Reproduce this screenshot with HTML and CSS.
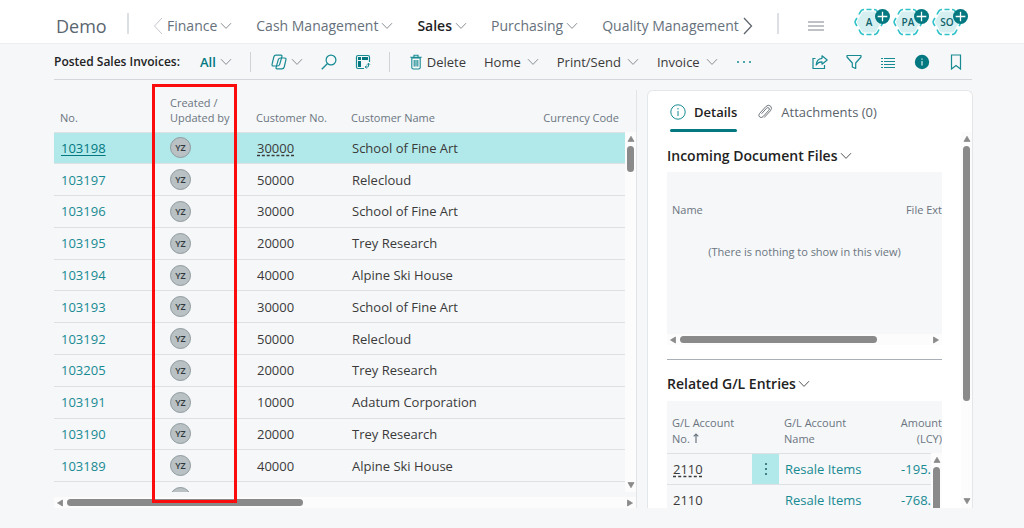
FILE: index.html
```html
<!DOCTYPE html>
<html lang="en">
<head>
<meta charset="utf-8">
<meta name="viewport" content="width=device-width, initial-scale=1">
<title>Posted Sales Invoices</title>
<link rel="stylesheet" href="styles.css">
</head>
<body>
<svg class="defs" aria-hidden="true">
  <symbol id="chev" viewBox="0 0 12 8"><path d="M1 1.2 6 6.4 11 1.2" fill="none" stroke="currentColor"/></symbol>
  <symbol id="up" viewBox="0 0 8 6"><path d="M4 0.3 7 5.4H1Z" fill="#8a8a8a" stroke="#8a8a8a" stroke-width=".8" stroke-linejoin="round"/></symbol>
  <symbol id="down" viewBox="0 0 8 6"><path d="M4 5.7 7 .6H1Z" fill="#8a8a8a" stroke="#8a8a8a" stroke-width=".8" stroke-linejoin="round"/></symbol>
  <symbol id="left" viewBox="0 0 6 8"><path d="M.5 4 5.5 1V7Z" fill="#8a8a8a" stroke="#8a8a8a" stroke-width=".8" stroke-linejoin="round"/></symbol>
  <symbol id="right" viewBox="0 0 6 8"><path d="M5.5 4 .5 1V7Z" fill="#8a8a8a" stroke="#8a8a8a" stroke-width=".8" stroke-linejoin="round"/></symbol>
  <symbol id="hex" viewBox="0 0 32 28"><path d="M10.5 5h11L26.500 14l-5 9h-11L5.500 14Z" fill="#d6eff1" stroke="#d6eff1" stroke-width="3" stroke-linejoin="round"/><path d="M6 6.500 7.200 4.200Q8.500 1.500 11 1.500M13.500 1.500H18.500M21 1.500Q23.500 1.500 24.800 4.200L26 6.500M28 10 29.500 12.500Q30.500 14 29.500 15.500L28 18M26 21.500 24.800 23.800Q23.500 26.500 21 26.500M18.500 26.500H13.500M11 26.500Q8.500 26.500 7.200 23.800L6 21.500M4 18 2.500 15.500Q1.500 14 2.500 12.500L4 10" fill="none" stroke="#2fc2c9" stroke-width="1.600"/></symbol>
  <symbol id="plus" viewBox="0 0 14 14"><circle cx="7" cy="7" r="7" fill="#037880"/><path d="M7 2.500v9M2.500 7h9" stroke="#fff" stroke-width="1.200"/></symbol>
</svg>

<header class="topbar">
  <a class="brand" href="#">Demo</a>
  <span class="rule"></span>
  <nav class="menu" aria-label="Main">
    <button class="arrow prev" aria-label="Previous"><svg viewBox="0 0 10 18"><path d="M9 1 1.500 9 9 17" fill="none" stroke="currentColor"/></svg></button>
    <div class="items">
      <button>Finance<svg class="chev"><use href="#chev"/></svg></button>
      <button>Cash Management<svg class="chev"><use href="#chev"/></svg></button>
      <button class="current">Sales<svg class="chev"><use href="#chev"/></svg></button>
      <button>Purchasing<svg class="chev"><use href="#chev"/></svg></button>
      <button>Quality Management</button>
    </div>
    <button class="arrow next" aria-label="Next"><svg viewBox="0 0 10 18"><path d="M1 1 8.500 9 1 17" fill="none" stroke="currentColor" stroke-width="1.300"/></svg></button>
  </nav>
  <span class="rule"></span>
  <button class="burger" aria-label="More"><svg viewBox="0 0 16 10"><path d="M0 1h16M0 5h16M0 9h16" stroke="#7c838a"/></svg></button>
  <div class="agents">
    <button class="agent"><svg class="hex"><use href="#hex"/></svg><span>A</span><svg class="plus"><use href="#plus"/></svg></button>
    <button class="agent"><svg class="hex"><use href="#hex"/></svg><span>PA</span><svg class="plus"><use href="#plus"/></svg></button>
    <button class="agent"><svg class="hex"><use href="#hex"/></svg><span>SO</span><svg class="plus"><use href="#plus"/></svg></button>
  </div>
</header>

<div class="toolbar">
  <h1>Posted Sales Invoices:</h1>
  <button class="view">All<svg class="chev"><use href="#chev"/></svg></button>
  <span class="rule"></span>
  <div class="tools">
    <button aria-label="Copilot"><svg class="i16" viewBox="0 0 16 16"><g fill="none" stroke="#178a92" stroke-width="1.200" stroke-linejoin="round"><path d="M5 1.200h5q1.300 0 .9 1.500L8.700 10.300Q8.200 12 6.500 12h-4Q.7 12 1.100 10.200L2.800 3Q3.300 1.200 5 1.200Z"/><path d="M11 14.800H6q-1.300 0-.9-1.500L7.300 5.700Q7.800 4 9.500 4h4q1.800 0 1.400 1.800L13.200 13Q12.700 14.800 11 14.800Z"/></g></svg><svg class="chev"><use href="#chev"/></svg></button>
    <button aria-label="Search"><svg class="i16" viewBox="0 0 16 16"><circle cx="10" cy="6" r="4.900" fill="none" stroke="#178a92" stroke-width="1.200"/><path d="M6.500 9.500.8 15.200" stroke="#178a92" stroke-width="1.300"/></svg></button>
    <button aria-label="Analyze"><svg class="i16" viewBox="0 0 16 16"><path d="M14.500 8V3Q14.500 1.500 13 1.500H3Q1.500 1.500 1.500 3V13Q1.500 14.500 3 14.500H9" fill="none" stroke="#178a92" stroke-width="1.200"/><path d="M3 3h3v3H3ZM7 3h6v3H7ZM3 7h3v6H3Z" fill="#037880"/><path d="M13.500 9.500V12q0 1-1 1H10.500M12 10.700 13.500 9.200 15 10.700M11.700 11.500 10.200 13l1.500 1.500" fill="none" stroke="#178a92" stroke-width="1"/></svg></button>
  </div>
  <span class="rule"></span>
  <div class="actions">
    <button class="delete"><svg class="trash" viewBox="0 0 12 16"><path d="M1.800 4h8.400v9.500q0 1.500-1.500 1.500H3.300q-1.500 0-1.500-1.500ZM.3 3.200h11.400M4 3V1.200h4V3M4.200 6v6.500M6 6v6.500M7.800 6v6.500" fill="none" stroke="#178a92" stroke-width="1.100"/></svg>Delete</button>
    <button>Home<svg class="chev"><use href="#chev"/></svg></button>
    <button>Print/Send<svg class="chev"><use href="#chev"/></svg></button>
    <button>Invoice<svg class="chev"><use href="#chev"/></svg></button>
    <button aria-label="More options"><svg class="dots" viewBox="0 0 16 4"><circle cx="2" cy="2" r="1" fill="#178a92"/><circle cx="8" cy="2" r="1" fill="#178a92"/><circle cx="14" cy="2" r="1" fill="#178a92"/></svg></button>
  </div>
  <div class="side-tools">
    <button aria-label="Share"><svg class="i16" viewBox="0 0 16 16"><path d="M3.500 4.500H1v10h11.500V11" fill="none" stroke="#178a92" stroke-width="1.200"/><path d="M10 1.800 15.200 6 10 10.200V7.800Q6.500 7.500 4.200 11 4.500 5 10 4.300Z" fill="none" stroke="#178a92" stroke-width="1.200" stroke-linejoin="round"/></svg></button>
    <button aria-label="Filter"><svg class="i16" viewBox="0 0 16 16"><path d="M1 1.500H15V3L9.700 9v5.500L6.300 13V9L1 3Z" fill="none" stroke="#178a92" stroke-width="1.200" stroke-linejoin="round"/></svg></button>
    <button aria-label="List"><svg class="i16" viewBox="0 0 16 16"><path d="M1 4.500h2M4 4.500h11M1 7.500h2M4 7.500h11M1 10.500h2M4 10.500h11M1 13.500h2M4 13.500h11" stroke="#178a92" stroke-width="1.100"/></svg></button>
    <button aria-label="Information"><svg class="i16" viewBox="0 0 16 16"><circle cx="8" cy="8" r="7.200" fill="#037880"/><path d="M8 7v4.500M8 4.400v1.300" stroke="#d6eff1" stroke-width="1.200"/></svg></button>
    <button aria-label="Bookmark"><svg class="i16" viewBox="0 0 16 16"><path d="M3.500 1h9v14L8 11.500 3.500 15Z" fill="none" stroke="#178a92" stroke-width="1.200"/></svg></button>
  </div>
</div>

<main class="content">
  <section class="list">
    <div class="viewport">
      <table class="invoices">
        <colgroup><col class="c-no"><col class="c-by"><col class="c-cust"><col><col class="c-cur"></colgroup>
        <thead><tr><th>No.</th><th>Created /<br>Updated by</th><th>Customer No.</th><th>Customer Name</th><th class="num">Currency Code</th></tr></thead>
        <tbody>
          <tr class="selected"><td><a href="#">103198</a></td><td><span class="avatar">YZ</span></td><td><span class="lookup">30000</span></td><td>School of Fine Art</td><td></td></tr>
          <tr><td><a href="#">103197</a></td><td><span class="avatar">YZ</span></td><td>50000</td><td>Relecloud</td><td></td></tr>
          <tr><td><a href="#">103196</a></td><td><span class="avatar">YZ</span></td><td>30000</td><td>School of Fine Art</td><td></td></tr>
          <tr><td><a href="#">103195</a></td><td><span class="avatar">YZ</span></td><td>20000</td><td>Trey Research</td><td></td></tr>
          <tr><td><a href="#">103194</a></td><td><span class="avatar">YZ</span></td><td>40000</td><td>Alpine Ski House</td><td></td></tr>
          <tr><td><a href="#">103193</a></td><td><span class="avatar">YZ</span></td><td>30000</td><td>School of Fine Art</td><td></td></tr>
          <tr><td><a href="#">103192</a></td><td><span class="avatar">YZ</span></td><td>50000</td><td>Relecloud</td><td></td></tr>
          <tr><td><a href="#">103205</a></td><td><span class="avatar">YZ</span></td><td>20000</td><td>Trey Research</td><td></td></tr>
          <tr><td><a href="#">103191</a></td><td><span class="avatar">YZ</span></td><td>10000</td><td>Adatum Corporation</td><td></td></tr>
          <tr><td><a href="#">103190</a></td><td><span class="avatar">YZ</span></td><td>20000</td><td>Trey Research</td><td></td></tr>
          <tr><td><a href="#">103189</a></td><td><span class="avatar">YZ</span></td><td>40000</td><td>Alpine Ski House</td><td></td></tr>
          <tr><td></td><td><span class="avatar"></span></td><td></td><td></td><td></td></tr>
        </tbody>
      </table>
    </div>
    <div class="vscroll list-v"><svg><use href="#up"/></svg><i class="thumb"></i><svg class="end"><use href="#down"/></svg></div>
    <div class="hscroll list-h"><svg><use href="#left"/></svg><i class="thumb"></i><svg class="end"><use href="#right"/></svg></div>
    <div class="highlight"></div>
  </section>

  <aside class="factbox">
    <div class="tabs">
      <button class="active"><svg class="i16" viewBox="0 0 16 16"><circle cx="8" cy="8" r="7.200" fill="none" stroke="#178a92"/><path d="M8 7v5M8 4v1.500" stroke="#178a92"/></svg>Details</button>
      <button><svg class="i16" viewBox="0 0 16 16"><path d="M4.500 9.800 9.600 4.200q1.200-1.200 2.300-.2t0 2.200L6 12.700q-1.800 1.700-3.500.2-1.500-1.700.1-3.500L8.800 2.600q2.500-2.500 4.800-.5 2 2.200-.2 4.700L7.200 13.500" fill="none" stroke="#70767c" stroke-width="1"/></svg>Attachments (0)</button>
    </div>
    <div class="parts">
      <div class="flow">
        <section class="part">
          <h2>Incoming Document Files<svg class="chev"><use href="#chev"/></svg></h2>
          <div class="files">
            <div class="files-head"><span>Name</span><span>File Ext</span></div>
            <p>(There is nothing to show in this view)</p>
          </div>
          <div class="hscroll files-h"><svg><use href="#left"/></svg><i class="thumb"></i><svg class="end"><use href="#right"/></svg></div>
        </section>
        <section class="part second">
          <h2>Related G/L Entries<svg class="chev"><use href="#chev"/></svg></h2>
          <div class="entries-box">
            <table class="entries">
              <colgroup><col class="e-no"><col class="e-dots"><col><col class="e-amt"></colgroup>
              <thead><tr><th>G/L Account<br>No. <svg class="sort" viewBox="0 0 6 10"><path d="M3 10V1M.7 3.300 3 1 5.300 3.300" fill="none" stroke="currentColor" stroke-width="1.200"/></svg></th><th></th><th>G/L Account<br>Name</th><th class="num">Amount<br>(LCY)</th></tr></thead>
              <tbody>
                <tr><td><span class="lookup">2110</span></td><td class="dots-cell"><button aria-label="Row options"><svg viewBox="0 0 4 14"><circle cx="2" cy="2" r="1" fill="#1d5c63"/><circle cx="2" cy="7" r="1" fill="#1d5c63"/><circle cx="2" cy="12" r="1" fill="#1d5c63"/></svg></button></td><td><a href="#">Resale Items</a></td><td class="num"><a href="#">-195.</a></td></tr>
                <tr><td>2110</td><td></td><td><a href="#">Resale Items</a></td><td class="num"><a href="#">-768.</a></td></tr>
              </tbody>
            </table>
            <div class="vscroll entries-v"><svg><use href="#up"/></svg><i class="thumb"></i></div>
          </div>
        </section>
      </div>
      <div class="vscroll parts-v"><svg><use href="#up"/></svg><i class="thumb"></i><svg class="end"><use href="#down"/></svg></div>
    </div>
  </aside>
</main>
</body>
</html>
```
FILE: styles.css
```css
* { box-sizing: border-box; }
body {
  margin: 0;
  height: 100vh;
  display: flex;
  flex-direction: column;
  overflow: hidden;
  background: #f5f7f9;
  color: #3b3a39;
  font: 13px/20px "Open Sans", "Noto Sans", sans-serif;
}
button {
  display: flex;
  align-items: center;
  padding: 0;
  border: 0;
  background: none;
  color: inherit;
  font: inherit;
  white-space: nowrap;
}
a { color: #178a92; text-decoration: none; }
svg { flex: none; }
.defs { position: absolute; width: 0; height: 0; }
.chev { width: 12px; height: 8px; color: #8a8f94; }
.i16 { width: 16px; height: 16px; }
.rule { flex: none; width: 1px; height: 20px; background: #d0d4d8; }

/* Top navigation */
.topbar {
  flex: none;
  display: flex;
  align-items: center;
  height: 44px;
  padding: 8px 52px 0 56px;
  background: #fff;
  border-bottom: 1px solid #eceef0;
  color: #66717c;
  font-size: 14px;
}
.brand { width: 71px; color: #5b6670; font-size: 18px; }
.topbar .rule { width: 2px; height: 21px; background: #dcdfe3; margin-bottom: 4px; }
.menu { display: flex; align-items: center; flex: 1; min-width: 0; padding: 0 24px; }
.items { display: flex; gap: 24px; flex: 1; min-width: 0; overflow: hidden; }
.items button { gap: 3px; }
.items .current { color: #1f1f1f; font-weight: 600; }
.arrow svg { width: 10px; height: 18px; }
.prev { margin-right: 4px; color: #c3c7cc; }
.next { color: #5f666d; }
.burger { margin: 0 29px; }
.burger svg { width: 16px; height: 10px; }
.agents { display: flex; gap: 7px; padding-right: 9px; }
.agent { position: relative; justify-content: center; width: 32px; height: 28px; margin-bottom: 8px; color: #10636a; font-size: 10px; font-weight: 600; }
.hex { position: absolute; inset: 0; width: 32px; height: 28px; }
.agent span { position: relative; }
.plus { position: absolute; top: 1px; right: -5px; width: 15px; height: 15px; }

/* Action bar */
.toolbar {
  flex: none;
  display: flex;
  align-items: center;
  height: 36px;
  margin: 0 52px 0 54px;
  border-bottom: 1px solid #d3d6da;
}
h1 { margin: 0 20px 0 0; color: #222; font-size: 12px; font-weight: 600; white-space: nowrap; }
.view { gap: 4px; margin-right: 18px; color: #037880; font-weight: 600; }
.tools { display: flex; align-items: center; gap: 18px; padding: 0 18px 0 20px; }
.tools button { gap: 4px; }
.actions { display: flex; align-items: center; gap: 18px; padding-left: 20px; }
.actions button { gap: 6px; }
.actions .delete { gap: 5px; }
.trash { width: 12px; height: 16px; }
.dots { width: 16px; height: 4px; }
.side-tools { display: flex; gap: 18px; margin-left: auto; padding-right: 8px; }

/* Page body */
.content { flex: 1; min-height: 0; display: flex; gap: 10px; margin: 0 51px 20px 54px; }
.list { position: relative; flex: 1; min-width: 0; display: grid; grid-template: minmax(0, 1fr) 11px / minmax(0, 1fr) 11px; row-gap: 5px; padding-right: 1px; }
.list::after { content: ""; position: absolute; top: 10px; right: 0; bottom: 0; width: 1px; background: #e2e5e8; }
.viewport { overflow: hidden; }
table { width: 100%; border-collapse: collapse; table-layout: fixed; }
th { padding: 0 0 7px 6px; color: #6b7580; font-size: 11px; font-weight: 400; line-height: 15px; text-align: left; vertical-align: bottom; white-space: nowrap; }
td { padding: 0 0 0 7px; border-bottom: 1px solid #dee1e4; white-space: nowrap; }
.num { padding-left: 0; text-align: right; }
.invoices { height: 434px; }
.invoices thead tr { height: 52px; }
.invoices thead { border-bottom: 1px solid #dee1e4; }
.invoices th.num { padding-right: 6px; }
.c-no { width: 110px; }
.c-by { width: 86px; }
.c-cust { width: 95px; }
.c-cur { width: 100px; }
.selected { background: #b1e9eb; }
.selected a { color: #037880; text-decoration: underline; text-underline-offset: 2px; }
.lookup { text-decoration: underline dashed; text-underline-offset: 2px; }
.avatar { display: block; width: 21px; height: 21px; margin-left: -1px; border: 1px solid #8e999d; border-radius: 50%; background: #b9c1c4; color: #30363a; font-size: 9px; font-weight: 600; line-height: 19px; text-align: center; }
.highlight { position: absolute; top: 4px; bottom: 5px; left: 98px; width: 85px; border: 3px solid #fb0d0d; }

/* Scroll bars */
.vscroll, .hscroll { display: flex; align-items: center; gap: 4px; background: #fcfcfc; }
.vscroll { flex-direction: column; padding: 4px 0; }
.hscroll { padding: 0 3px; }
.vscroll svg { width: 8px; height: 6px; }
.hscroll svg { width: 6px; height: 8px; }
.vscroll .end { margin-top: auto; }
.hscroll .end { margin-left: auto; }
.thumb { flex: none; width: 7px; height: 7px; border-radius: 4px; background: #8a8a8a; }
.list-v { margin-top: 52px; }
.list-v .thumb { height: 26px; }
.list-h { grid-column: 1 / 3; }
.list-h .thumb { width: 236px; }

/* Details pane */
.factbox { flex: none; width: 326px; display: flex; flex-direction: column; margin-top: 10px; background: #fff; border: 1px solid #e4e7ea; border-bottom: 0; border-radius: 6px 6px 0 0; overflow: hidden; }
.tabs { flex: none; display: flex; gap: 20px; padding: 0 22px; color: #5a636b; }
.tabs button { position: relative; gap: 8px; height: 41px; }
.tabs .active { color: #222; font-weight: 600; }
.tabs .active::after { content: ""; position: absolute; inset: auto 0 0; height: 3px; border-radius: 2px; background: #037880; }
.parts { flex: 1; min-height: 0; display: flex; padding-left: 19px; }
.flow { flex: 1; min-width: 0; margin-right: 19px; overflow: hidden; }
h2 { display: flex; align-items: center; gap: 2px; margin: 0; color: #222; font-size: 14px; font-weight: 600; line-height: 20px; }
h2 .chev { color: #555; }
.part { padding-top: 14px; }
.second { margin-top: 14px; border-top: 1px solid #aab0b8; }
.files { height: 162px; margin-top: 6px; padding-top: 30px; background: #f5f7f9; color: #6b7580; font-size: 11px; line-height: 16px; overflow: hidden; }
.files-head { display: flex; justify-content: space-between; padding-left: 5px; }
.files p { margin: 26px 0 0; text-align: center; }
.files-h { height: 11px; }
.files-h .thumb { width: 197px; }
.entries-box { position: relative; margin-top: 7px; background: #f5f7f9; }
.entries thead tr { height: 52px; }
.entries thead { border-bottom: 1px solid #dee1e4; }
.entries tbody tr { height: 31px; }
.entries th { padding: 0 0 6px 5px; line-height: 16px; }
.entries th.num { padding-left: 0; }
.entries td { padding-left: 6px; }
.entries td.num { padding: 0 11px 0 0; }
.entries .dots-cell { padding: 0; background: #b1e9eb; }
.dots-cell button { justify-content: center; width: 100%; }
.dots-cell svg { width: 4px; height: 14px; }
.sort { width: 6px; height: 10px; }
.e-no { width: 85px; }
.e-dots { width: 27px; }
.e-amt { width: 60px; }
.entries-v { position: absolute; top: 52px; right: 0; bottom: 0; width: 11px; overflow: hidden; }
.entries-v .thumb { height: 60px; }
.parts-v { flex: none; width: 11px; }
.parts-v .thumb { height: 255px; }
```
